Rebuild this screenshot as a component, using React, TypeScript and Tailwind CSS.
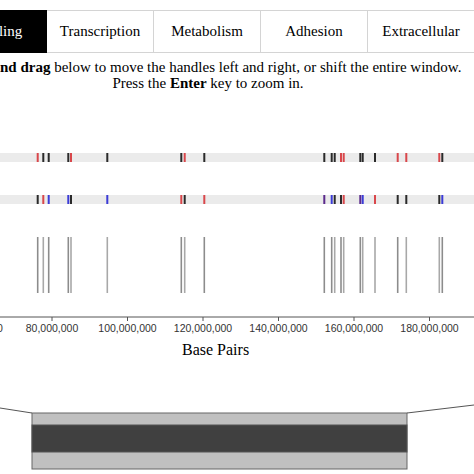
import React from "react";

type Mark = [number, string];

const C: Record<string, string> = {
  k: "#2a2a2a",
  r: "#d9474b",
  b: "#3b3bd6",
  p: "#5b2a8c",
};

const track1: Mark[] = [
  [37.7, "r"], [43.3, "k"], [48.7, "k"], [68.3, "k"], [71, "r"], [107.3, "k"],
  [181.3, "k"], [184.7, "r"], [204.3, "k"], [324.3, "k"], [331.7, "k"], [334.7, "k"],
  [341, "r"], [343.7, "r"], [360.3, "k"], [362.7, "k"], [375, "k"], [397.7, "r"],
  [406.3, "r"], [439.3, "r"], [442.3, "k"],
];

const track2: Mark[] = [
  [37.7, "k"], [43.3, "r"], [48.7, "b"], [68.3, "b"], [71, "k"], [107.3, "b"],
  [181.3, "r"], [184.7, "k"], [204.3, "r"], [324.3, "p"], [331.7, "b"], [334.7, "k"],
  [341, "k"], [343.7, "r"], [360.3, "p"], [362.7, "b"], [375, "r"], [397.7, "k"],
  [406.3, "k"], [439.3, "k"], [442.3, "b"],
];

const lineShade: number[] = [1, 0, 1, 1, 0, 0, 1, 0, 1, 1, 1, 0, 1, 0, 1, 0, 0, 1, 0, 0, 1];

const labels: [number, string][] = [
  [-23.5, "60,000,000"],
  [52, "80,000,000"],
  [127.5, "100,000,000"],
  [203, "120,000,000"],
  [278.5, "140,000,000"],
  [354, "160,000,000"],
  [429.5, "180,000,000"],
];

const tabs = ["Signaling", "Transcription", "Metabolism", "Adhesion", "Extracellular"];

export default function App() {
  return (
    <div
      className="relative w-[474px] h-[474px] overflow-hidden bg-white text-black"
      style={{ fontFamily: '"Liberation Serif", "Times New Roman", serif' }}
    >
      <div className="pt-[10px]">
        <div className="flex -ml-[60px] w-[600px] h-[43px]">
          {tabs.map((t, i) => (
            <div
              key={t}
              className={
                i === 0
                  ? "w-[107px] shrink-0 flex items-center justify-center bg-black text-white text-[15px] border-y border-black"
                  : "w-[107px] shrink-0 flex items-center justify-center bg-white text-[15px] border-y border-r border-[#d4d4d4]"
              }
            >
              {t}
            </div>
          ))}
        </div>

        <div className="-ml-[92px] w-[600px] mt-[6px] text-center text-[15px] leading-[16px] whitespace-nowrap">
          <div>
            <b>Click and drag</b> below to move the handles left and right, or shift the entire window.
          </div>
          <div>
            Press the <b>Enter</b> key to zoom in.
          </div>
        </div>

        <svg className="block mt-[49px]" width="474" height="200" viewBox="0 0 474 200">
          <rect x="0" y="13" width="474" height="9" fill="#ebebeb" />
          <rect x="0" y="55" width="474" height="9" fill="#ebebeb" />
          {track1.map(([x, c], i) => (
            <rect key={"a" + i} x={x - 1} y="13" width="2" height="9" fill={C[c]} />
          ))}
          {track2.map(([x, c], i) => (
            <rect key={"b" + i} x={x - 1} y="55" width="2" height="9" fill={C[c]} />
          ))}
          {track1.map(([x], i) => (
            <line
              key={"l" + i}
              x1={x}
              x2={x}
              y1="97"
              y2="153"
              stroke={lineShade[i] ? "#8c8c8c" : "#a8a8a8"}
              strokeWidth="1.6"
            />
          ))}
          <line x1="0" x2="474" y1="177" y2="177" stroke="#555" strokeWidth="1" />
          {labels.map(([x, t]) => (
            <g key={t}>
              <line x1={x} x2={x} y1="177" y2="181" stroke="#555" strokeWidth="1" />
              <text
                x={x}
                y="192"
                textAnchor="middle"
                fontSize="10.5"
                fill="#333"
                style={{ fontFamily: '"Liberation Sans", Arial, sans-serif' }}
              >
                {t}
              </text>
            </g>
          ))}
        </svg>

        <div className="mt-[2px] w-[474px] pl-[182px] text-[16px] leading-[16px]">Base Pairs</div>

        <svg className="block mt-[42px]" width="474" height="74" viewBox="0 0 474 74">
          <line x1="0" y1="8" x2="32" y2="13" stroke="#555" strokeWidth="1" />
          <line x1="407" y1="13" x2="474" y2="5" stroke="#555" strokeWidth="1" />
          <rect x="32" y="13" width="375" height="56" fill="#c0c0c0" stroke="#666" strokeWidth="1" />
          <rect x="32" y="25" width="375" height="27" fill="#404040" stroke="#555" strokeWidth="1" />
        </svg>
      </div>
    </div>
  );
}
